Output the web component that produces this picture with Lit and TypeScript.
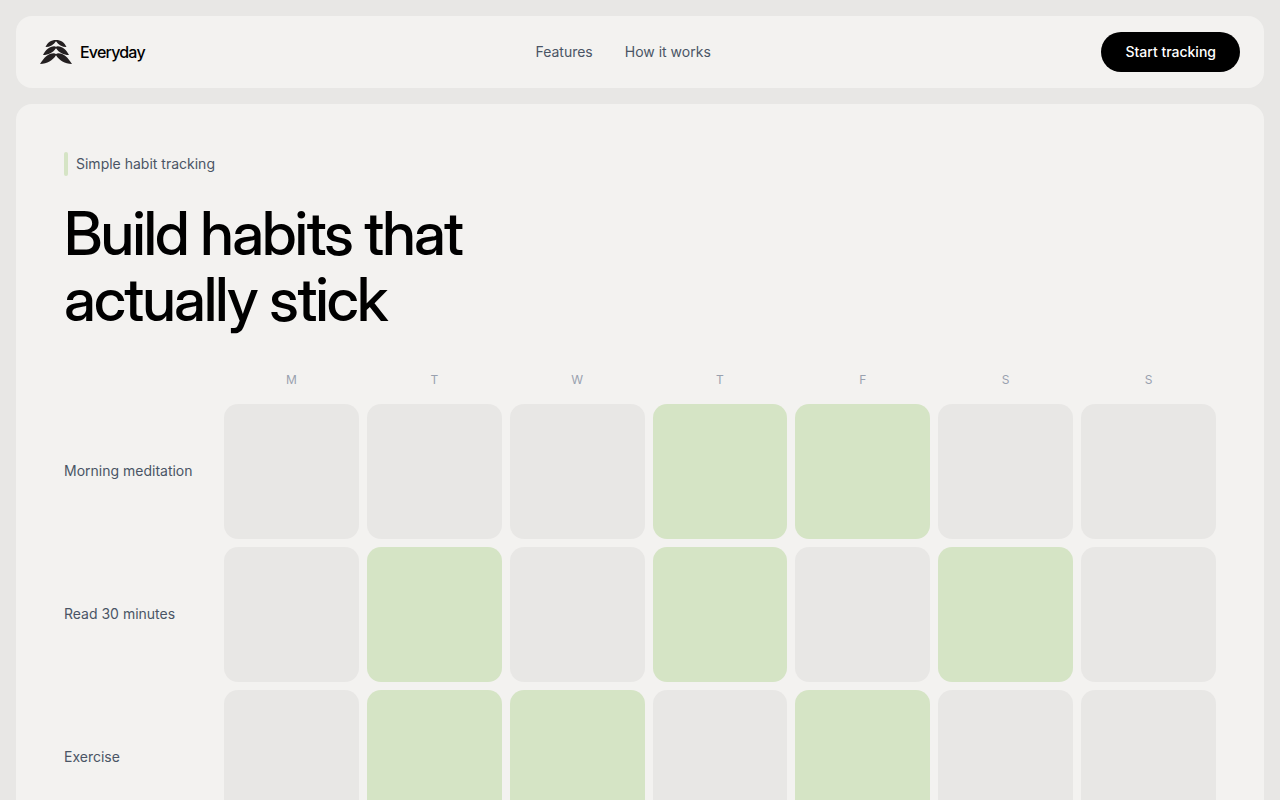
import { LitElement, html, css } from "lit";
import { customElement, state } from "lit/decorators.js";
import { classMap } from "lit/directives/class-map.js";

interface Habit {
  name: string;
  done: boolean[];
}

const DAYS = [
  { short: "M", name: "Monday" },
  { short: "T", name: "Tuesday" },
  { short: "W", name: "Wednesday" },
  { short: "T", name: "Thursday" },
  { short: "F", name: "Friday" },
  { short: "S", name: "Saturday" },
  { short: "S", name: "Sunday" },
];

const week = (...on: number[]) => DAYS.map((_, i) => on.includes(i));

@customElement("site-header")
export class SiteHeader extends LitElement {
  static styles = css`
    :host {
      display: block;
    }
    .bar {
      display: flex;
      align-items: center;
      justify-content: space-between;
      padding: 16px 24px;
      border-radius: 16px;
      background: #f3f2f0;
    }
    .brand {
      display: flex;
      align-items: center;
      gap: 8px;
      color: #000;
      font-size: 16px;
      line-height: 24px;
      font-weight: 500;
      letter-spacing: -0.05em;
      text-decoration: none;
    }
    .logo {
      display: block;
      width: 32px;
      height: 24px;
      fill: #231f20;
    }
    .links {
      display: flex;
      gap: 32px;
    }
    .link {
      color: #4a5565;
      font-size: 14px;
      line-height: 20px;
      text-decoration: none;
    }
    .link:hover {
      color: #000;
    }
    .cta {
      padding: 10px 24px;
      border: 0;
      border-radius: 20px;
      background: #000;
      color: #fff;
      font: inherit;
      font-size: 14px;
      line-height: 20px;
      font-weight: 500;
      cursor: pointer;
    }
  `;

  render() {
    return html`
      <header class="bar">
        <a class="brand" href="#">
          <svg class="logo" viewBox="0 0 32 24" aria-hidden="true">
            <path d="M5.500 7C7.500 2.500 11 0 16 0s8.500 2.500 10.500 7C22 7 18.500 5 16 1.200 13.500 5 10 7 5.500 7Z" />
            <path d="M3 15C5.500 9.800 9.500 6.300 14.300 6.200L16 6.800l1.700-.6C22.500 6.300 26.500 9.800 29 15c-5.500 0-10-2.500-13-6.800C13 12.500 8.500 15 3 15Z" />
            <path d="M0 24C4 17.500 8 13.300 14 13.200L16 14l2-.8C24 13.300 28 17.500 32 24c-7.500-.2-12.500-3.500-16-8.800C12.500 20.500 7.500 23.800 0 24Z" />
          </svg>
          <span>Everyday</span>
        </a>
        <nav class="links" aria-label="Main">
          <a class="link" href="#features">Features</a>
          <a class="link" href="#how-it-works">How it works</a>
        </nav>
        <button class="cta" type="button">Start tracking</button>
      </header>
    `;
  }
}

@customElement("habit-grid")
export class HabitGrid extends LitElement {
  static styles = css`
    :host {
      display: block;
    }
    .grid {
      display: grid;
      grid-template-columns: 152px repeat(7, minmax(0, 1fr));
      gap: 8px;
    }
    .day {
      padding: 8px 0;
      color: #99a1af;
      font-size: 12px;
      line-height: 16px;
      text-align: center;
    }
    .name {
      align-self: center;
      color: #4a5565;
      font-size: 14px;
      line-height: 20px;
    }
    .cell {
      width: 100%;
      aspect-ratio: 1;
      padding: 0;
      border: 0;
      border-radius: 14px;
      background: #e8e7e5;
      cursor: pointer;
    }
    .done {
      background: #d5e4c5;
    }
  `;

  @state() private habits: Habit[] = [
    { name: "Morning meditation", done: week(3, 4) },
    { name: "Read 30 minutes", done: week(1, 3, 5) },
    { name: "Exercise", done: week(1, 2, 4) },
  ];

  private toggle(row: number, col: number) {
    this.habits = this.habits.map((habit, r) =>
      r === row ? { ...habit, done: habit.done.map((on, c) => (c === col ? !on : on)) } : habit,
    );
  }

  render() {
    return html`
      <div class="grid">
        <span></span>
        ${DAYS.map((day) => html`<span class="day">${day.short}</span>`)}
        ${this.habits.map(
          (habit, row) => html`
            <span class="name">${habit.name}</span>
            ${habit.done.map(
              (on, col) => html`
                <button
                  type="button"
                  class=${classMap({ cell: true, done: on })}
                  aria-label="${habit.name}, ${DAYS[col].name}"
                  aria-pressed=${on ? "true" : "false"}
                  @click=${() => this.toggle(row, col)}
                ></button>
              `,
            )}
          `,
        )}
      </div>
    `;
  }
}

@customElement("app-root")
export class AppRoot extends LitElement {
  static styles = css`
    :host {
      display: block;
      min-height: 100vh;
      box-sizing: border-box;
      padding: 16px;
      background: #e8e7e5;
      color: #000;
      font-family: Inter, sans-serif;
    }
    .page {
      display: grid;
      gap: 16px;
    }
    .hero {
      padding: 48px;
      border-radius: 16px;
      background: #f3f2f0;
    }
    .tagline {
      display: flex;
      align-items: center;
      gap: 8px;
      margin: 0 0 24px;
      color: #4a5565;
      font-size: 14px;
      line-height: 24px;
    }
    .accent {
      width: 4px;
      height: 24px;
      border-radius: 2px;
      background: #d5e4c5;
    }
    .title {
      max-width: 576px;
      margin: 0 0 32px;
      font-family: "Inter Display", Inter, sans-serif;
      font-size: 60px;
      line-height: 66px;
      font-weight: 500;
      letter-spacing: -0.03em;
    }
  `;

  render() {
    return html`
      <div class="page">
        <site-header></site-header>
        <main class="hero">
          <p class="tagline"><span class="accent"></span>Simple habit tracking</p>
          <h1 class="title">Build habits that<br />actually stick</h1>
          <habit-grid></habit-grid>
        </main>
      </div>
    `;
  }
}
